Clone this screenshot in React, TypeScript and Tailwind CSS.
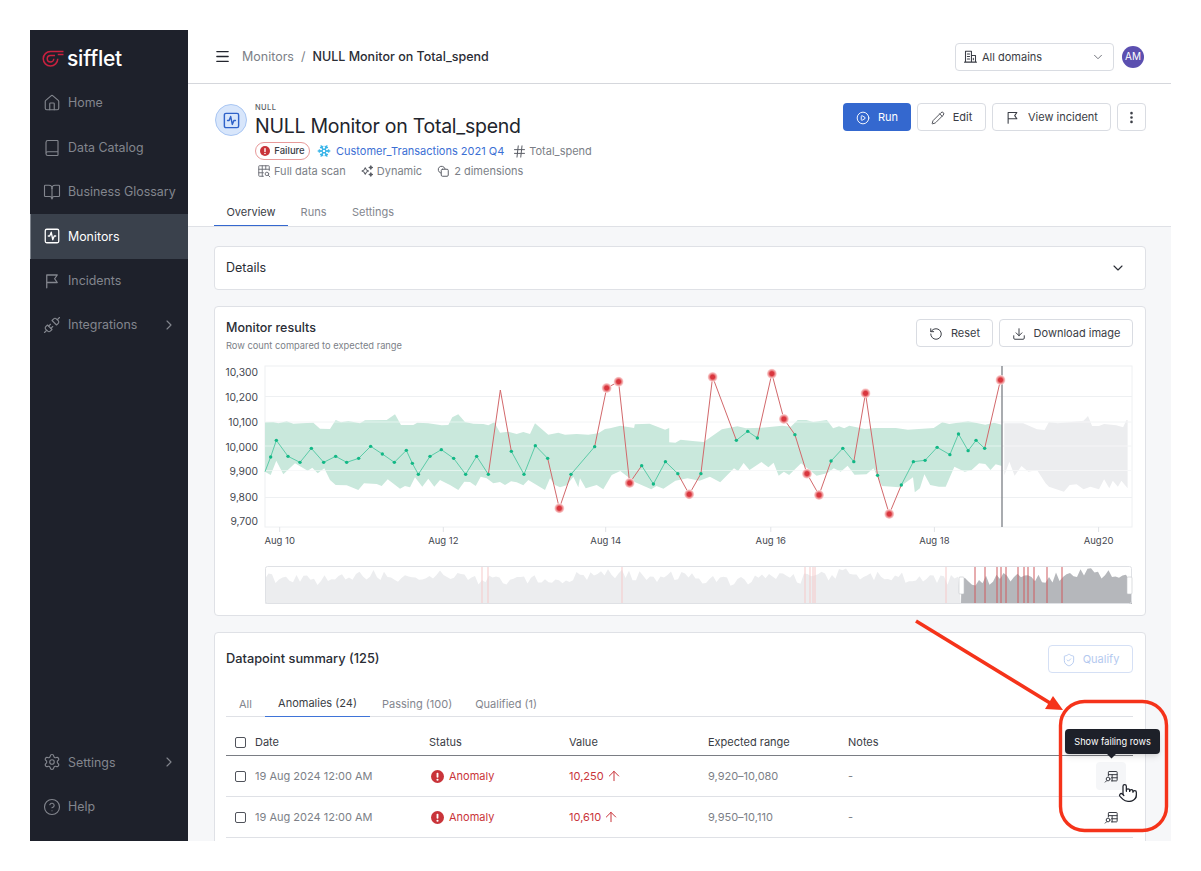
import {
  ArrowUp,
  BookOpen,
  Book,
  ChevronDown,
  ChevronRight,
  CircleHelp,
  CirclePlay,
  Download,
  EllipsisVertical,
  Hash,
  House,
  Menu,
  Pencil,
  Pointer,
  RotateCcw,
  Settings,
  ShieldCheck,
  Snowflake,
  SquareActivity,
  Unplug,
} from "lucide-react";

type Pt = [number, number];

// chart coordinates were read off two crops, so two scales
const a = (x: number, y: number): Pt => [x / 3, y / 3];
const b = (x: number, y: number): Pt => [395 + x / 2.904, y / 3];
const toPts = (list: Pt[]) => list.map((p) => `${p[0].toFixed(1)},${p[1].toFixed(1)}`).join(" ");

const bandTop: Pt[] = [
  a(150, 187), a(175, 186), a(190, 190), a(215, 184), a(235, 191), a(260, 190), a(295, 188), a(315, 206), a(345, 207),
  a(362, 180), a(378, 187), a(400, 183), a(435, 190), a(450, 181), a(515, 180), a(540, 163), a(558, 195), a(595, 195),
  a(607, 188), a(640, 190), a(680, 196), a(700, 195), a(712, 172), a(730, 163), a(750, 186), a(775, 191), a(805, 192),
  a(820, 196), a(838, 187), a(855, 218), a(880, 215), a(905, 222), a(925, 216), a(945, 222), a(960, 190), a(1000, 224),
  a(1030, 218), a(1050, 224), a(1085, 222), a(1120, 224), a(1150, 220), a(1170, 207), a(1185, 205),
  b(30, 197), b(70, 204), b(72, 193), b(115, 191), b(160, 209), b(172, 204), b(172, 247), b(190, 248), b(205, 239),
  b(240, 243), b(272, 246), b(325, 208), b(370, 199), b(395, 205), b(440, 203), b(500, 197), b(525, 200), b(545, 180),
  b(570, 180), b(590, 186), b(630, 180), b(648, 205), b(665, 199), b(680, 205), b(695, 197), b(740, 207), b(770, 204),
  b(830, 204), b(865, 209), b(940, 204), b(965, 187), b(985, 192), b(1040, 184), b(1090, 194), b(1115, 188), b(1138, 194),
];
const bandBottom: Pt[] = [
  a(150, 335), a(167, 345), a(184, 302), a(205, 343), a(240, 310), a(278, 332), a(292, 323), a(308, 340), a(328, 325),
  a(345, 360), a(362, 375), a(395, 376), a(430, 390), a(447, 370), a(485, 372), a(500, 378), a(518, 358), a(555, 386),
  a(570, 378), a(585, 382), a(600, 352), a(622, 380), a(640, 356), a(658, 380), a(675, 360), a(705, 375), a(730, 390),
  a(748, 365), a(765, 366), a(782, 378), a(797, 350), a(815, 355), a(835, 370), a(855, 366), a(870, 375), a(888, 364),
  a(905, 367), a(925, 376), a(940, 360), a(990, 390), a(1005, 355), a(1020, 375), a(1035, 382), a(1055, 376), a(1075, 350),
  a(1090, 382), a(1095, 355), a(1112, 385), a(1145, 375), a(1165, 388), a(1190, 345),
  b(30, 333), b(70, 365), b(120, 388), b(135, 378), b(155, 386), b(190, 362), b(225, 355), b(260, 362), b(290, 350),
  b(320, 367), b(360, 325), b(372, 333), b(388, 309), b(405, 330), b(440, 306), b(460, 322), b(475, 308), b(490, 347),
  b(505, 335), b(520, 345), b(555, 310), b(600, 347), b(630, 340), b(650, 325), b(670, 335), b(690, 317), b(710, 344),
  b(745, 343), b(765, 325), b(790, 378), b(840, 382), b(880, 352), b(885, 397), b(900, 385), b(913, 343), b(930, 375),
  b(955, 380), b(975, 380), b(1000, 320), b(1030, 335), b(1050, 330), b(1072, 310), b(1090, 312), b(1105, 330), b(1120, 313),
  b(1138, 318),
];
const forecastTop: Pt[] = [
  b(1145, 190), b(1200, 190), b(1240, 208), b(1262, 210), b(1275, 186), b(1300, 190), b(1340, 186), b(1375, 182),
  b(1388, 168), b(1400, 198), b(1420, 198), b(1435, 192), b(1470, 196), b(1490, 202), b(1500, 180), b(1503, 180),
];
const forecastBottom: Pt[] = [
  b(1145, 346), b(1160, 305), b(1175, 347), b(1195, 318), b(1215, 335), b(1240, 330), b(1265, 370), b(1275, 380),
  b(1318, 395), b(1335, 375), b(1355, 373), b(1375, 388), b(1395, 380), b(1420, 388), b(1435, 358), b(1450, 385),
  b(1460, 362), b(1475, 380), b(1485, 362), b(1503, 385),
];

type Kind = "g" | "r" | "n" | "l";
const series: [Pt, Kind][] = [
  [a(150, 335), "l"], [a(167, 291), "g"], [a(184, 241), "g"], [a(219, 289), "g"], [a(255, 307), "g"], [a(289, 265), "g"],
  [a(326, 307), "g"], [a(362, 289), "g"], [a(395, 307), "g"], [a(431, 295), "g"], [a(467, 259), "g"], [a(502, 282), "g"],
  [a(538, 307), "g"], [a(574, 271), "g"], [a(592, 310), "g"], [a(610, 343), "g"], [a(645, 289), "g"], [a(679, 269), "g"],
  [a(716, 295), "g"], [a(752, 343), "g"], [a(785, 289), "g"], [a(820, 343), "g"], [a(856, 90), "n"], [a(889, 274), "g"],
  [a(927, 343), "g"], [a(961, 257), "g"], [a(998, 295), "g"], [a(1033, 445), "r"], [a(1068, 343), "g"], [a(1139, 260), "g"],
  [a(1175, 84), "r"], [b(25, 65), "r"], [b(57, 369), "r"], [b(92, 317), "g"], [b(126, 372), "g"], [b(161, 305), "g"],
  [b(197, 341), "g"], [b(230, 403), "r"], [b(264, 341), "g"], [b(298, 51), "r"], [b(367, 241), "g"], [b(400, 214), "g"],
  [b(428, 234), "g"], [b(470, 41), "r"], [b(505, 177), "r"], [b(537, 224), "g"], [b(572, 341), "r"], [b(607, 405), "r"],
  [b(642, 303), "g"], [b(676, 265), "g"], [b(708, 305), "g"], [b(742, 100), "r"], [b(777, 346), "g"], [b(811, 462), "r"],
  [b(846, 375), "g"], [b(881, 305), "g"], [b(915, 301), "g"], [b(950, 262), "g"], [b(987, 284), "g"], [b(1012, 222), "g"],
  [b(1040, 272), "g"], [b(1063, 241), "g"], [b(1088, 265), "g"], [b(1134, 60), "r"],
];

const yLabels: [string, number][] = [
  ["10,300", 12], ["10,200", 37], ["10,100", 62], ["10,000", 87], ["9,900", 111], ["9,800", 137], ["9,700", 161],
];
const gridY = [36.5, 62, 86, 110.5, 137.5];
const xTicks: [string, number][] = [
  ["Aug 10", 64.7], ["Aug 12", 228.3], ["Aug 14", 390.7], ["Aug 16", 555.8], ["Aug 18", 719.4], ["Aug20", 883.6],
];

// jagged outline of the overview strip, seeded so it stays the same on each load
const overview: Pt[] = (() => {
  const out: Pt[] = [];
  let seed = 17;
  for (let x = 50; x <= 917; x += 3.5) {
    seed = (seed * 1103 + 12345) % 2147;
    const noise = (seed / 2147) * 11;
    const wave = Math.sin(x / 37) * 2.5 + Math.sin(x / 13) * 1.5;
    out.push([x, 9 + noise + wave]);
  }
  return out;
})();
const lightMarks = [267, 273, 407, 590, 595, 598, 600, 731];
const darkMarks = [760, 770, 782, 786, 791, 803, 809, 813, 819, 832, 847];

function TableSearchIcon({ className }: { className?: string }) {
  return (
    <svg className={className} viewBox="0 0 24 24" fill="none" stroke="currentColor" strokeWidth={1.6} strokeLinecap="round" strokeLinejoin="round">
      <path d="M7 11V5a1 1 0 0 1 1-1h12a1 1 0 0 1 1 1v13a1 1 0 0 1-1 1h-8" />
      <path d="M7 9h14M12 14h9M13 9v10" />
      <circle cx="6.500" cy="16" r="3" />
      <path d="M4 19l-2 2" />
    </svg>
  );
}

function ScanIcon({ className }: { className?: string }) {
  return (
    <svg className={className} viewBox="0 0 24 24" fill="none" stroke="currentColor" strokeWidth={1.6} strokeLinecap="round" strokeLinejoin="round">
      <path d="M11 21H4a1 1 0 0 1-1-1V4a1 1 0 0 1 1-1h16a1 1 0 0 1 1 1v7" />
      <path d="M3 9h18M3 15h8M9 3v18M15 3v6" />
      <circle cx="17" cy="17" r="3" />
      <path d="M19.500 19.500L22 22" />
    </svg>
  );
}

function ShapesIcon({ className }: { className?: string }) {
  return (
    <svg className={className} viewBox="0 0 24 24" fill="none" stroke="currentColor" strokeWidth={1.7} strokeLinecap="round" strokeLinejoin="round">
      <path d="M8 15.500a6 6 0 1 1 7.500-7.500" />
      <rect x="9" y="9" width="12" height="12" rx="2" />
    </svg>
  );
}

function SparkIcon({ className }: { className?: string }) {
  return (
    <svg className={className} viewBox="0 0 24 24" fill="none" stroke="currentColor" strokeWidth={1.8} strokeLinejoin="round">
      <path d="M9 6.500l2 3.500 3.500 2-3.500 2-2 3.500-2-3.500-3.500-2 3.500-2z" />
      <path d="M18.500 3l1 2 2 1-2 1-1 2-1-2-2-1 2-1z" fill="currentColor" />
      <path d="M18.500 15l1 2 2 1-2 1-1 2-1-2-2-1 2-1z" fill="currentColor" />
    </svg>
  );
}

function BuildingIcon({ className }: { className?: string }) {
  return (
    <svg className={className} viewBox="0 0 24 24" fill="none" stroke="currentColor" strokeWidth={1.7} strokeLinecap="round" strokeLinejoin="round">
      <path d="M2.500 21h19M4 21V3.500h9.500V21M13.500 10.500H20V21" />
      <path d="M7 8h3.500M7 12h3.500M7 16h3.500M16.500 15v2" />
    </svg>
  );
}

function FlagIcon({ className }: { className?: string }) {
  return (
    <svg className={className} viewBox="0 0 24 24" fill="none" stroke="currentColor" strokeWidth={1.7} strokeLinecap="round" strokeLinejoin="round">
      <path d="M5 21V4h14l-3.500 5 3.500 5H5" />
    </svg>
  );
}

function AlertDot({ className }: { className?: string }) {
  return (
    <svg className={className} viewBox="0 0 24 24">
      <circle cx="12" cy="12" r="12" fill="#c9343a" />
      <rect x="10.300" y="5" width="3.400" height="9.500" rx="1.500" fill="#fff" />
      <circle cx="12" cy="18" r="2" fill="#fff" />
    </svg>
  );
}

function Logo() {
  return (
    <div className="flex h-[51px] items-center pl-3 pt-[6px]">
      <svg className="h-[17px] w-[22px]" viewBox="0 0 22 17" fill="none" stroke="#c9213f" strokeWidth={1.5}>
        <path d="M21.500 1.500H8.500a7.250 7.250 0 1 0 7.250 7.250" />
        <path d="M13 5.500H8.500a3.250 3.250 0 1 0 3.250 3.250" />
        <path d="M15.750 4.500h5.750" />
      </svg>
      <span className="ml-[3px] text-[21px] leading-none font-medium tracking-[-0.2px] text-white">sifflet</span>
    </div>
  );
}

function NavItem({ icon, label, active, arrow }: { icon: React.ReactNode; label: string; active?: boolean; arrow?: boolean }) {
  return (
    <div
      className={`flex h-[44.400px] items-center gap-[7px] whitespace-nowrap pr-[11px] text-[12.400px] ${
        active ? "border-l border-[#7d838c] bg-[#3a414c] pl-[12px] text-white" : "pl-[13px] text-[#83868e]"
      }`}
    >
      {icon}
      <span className="flex-1 pt-[1px]">{label}</span>
      {arrow && <ChevronRight className="h-4 w-4" strokeWidth={1.7} />}
    </div>
  );
}

function OutlineButton({ children, className }: { children: React.ReactNode; className?: string }) {
  return (
    <button className={`flex h-7 items-center justify-center gap-[8px] rounded border border-[#d9dce2] bg-white pt-[1px] text-[11px] text-[#3a3d45] ${className ?? ""}`}>
      {children}
    </button>
  );
}

function Chart() {
  const segments = series.slice(1).map((item, i) => {
    const prev = series[i];
    const red = item[1] === "r" || item[1] === "n" || prev[1] === "r" || prev[1] === "n";
    return { from: prev[0], to: item[0], red };
  });
  return (
    <svg className="block h-[190px] w-[930px]" viewBox="0 0 930 190">
      <defs>
        <radialGradient id="glow">
          <stop offset="40%" stopColor="#d9363e" />
          <stop offset="65%" stopColor="#ec8a8c" />
          <stop offset="100%" stopColor="#fde3e3" />
        </radialGradient>
      </defs>
      <rect x="50" y="6" width="867" height="161" fill="#fff" stroke="#eef0f2" />
      {gridY.map((y) => (
        <line key={y} x1="50" x2="917" y1={y} y2={y} stroke="#eef0f2" />
      ))}
      <polygon points={toPts([...bandTop, ...[...bandBottom].reverse()])} fill="#c9e8dc" />
      <polygon points={toPts([...forecastTop, ...[...forecastBottom].reverse()])} fill="#ecedef" />
      {gridY.slice(1, 4).map((y) => (
        <line key={y} x1="50" x2="917" y1={y} y2={y} stroke="#fff" strokeOpacity={0.5} />
      ))}
      <line x1="787" x2="787" y1="6" y2="167" stroke="#85888e" strokeWidth={1.4} />
      {segments.map((s, i) => (
        <line key={i} x1={s.from[0]} y1={s.from[1]} x2={s.to[0]} y2={s.to[1]} stroke={s.red ? "#d2686b" : "#5ccba8"} strokeWidth={1} />
      ))}
      {series.map(([p, kind], i) =>
        kind === "g" ? (
          <circle key={i} cx={p[0]} cy={p[1]} r={1.7} fill="#12b886" />
        ) : kind === "r" ? (
          <circle key={i} cx={p[0]} cy={p[1]} r={5} fill="url(#glow)" />
        ) : null,
      )}
      {yLabels.map(([label, y]) => (
        <text key={label} x="43" y={y + 4} textAnchor="end" fontSize="10.3" fill="#44474f">
          {label}
        </text>
      ))}
      {xTicks.map(([label, x]) => (
        <g key={label}>
          <line x1={x} x2={x} y1="167" y2="172" stroke="#e1e3e7" />
          <text x={x} y="184" textAnchor="middle" fontSize="9.5" fill="#44474f">
            {label}
          </text>
        </g>
      ))}
    </svg>
  );
}

function Overview() {
  const leftPart = overview.filter((p) => p[0] <= 746);
  const rightPart = overview.filter((p) => p[0] >= 746);
  return (
    <svg className="mt-[13px] block h-[45px] w-[930px]" viewBox="0 0 930 45">
      <polygon points={toPts([[50, 41], ...leftPart, [746, 41]])} fill="#ecedef" />
      <polygon points={toPts([[746, 41], ...rightPart, [917, 41]])} fill="#b5b7bb" />
      {lightMarks.map((x) => (
        <line key={x} x1={x} x2={x} y1="3" y2="41" stroke="#f6c9c9" />
      ))}
      {darkMarks.map((x) => (
        <line key={x} x1={x} x2={x} y1="3" y2="41" stroke="#cf5b5f" />
      ))}
      <rect x="50.500" y="3.500" width="866" height="37" rx="2" fill="none" stroke="#dfe1e5" />
      <rect x="744" y="14" width="5" height="17" rx="1" fill="#fff" stroke="#c5c7cb" strokeWidth={0.6} />
      <rect x="912" y="14" width="5" height="17" rx="1" fill="#fff" stroke="#c5c7cb" strokeWidth={0.6} />
    </svg>
  );
}

const rowGrid = "grid grid-cols-[29px_174px_140px_139px_140px_1fr_44px] items-center";

function Row({ value, hovered }: { value: string; hovered?: boolean }) {
  return (
    <div className={`${rowGrid} h-[41px] border-b border-[#dfe1e6] text-[11px]`}>
      <span className="ml-[9px] h-[11px] w-[11px] rounded-[2px] border border-[#50535b]" />
      <span className="text-[#7c7f87]">19 Aug 2024 12:00 AM</span>
      <span className="ml-[2px] flex items-center gap-[5px] text-[#c9343a]">
        <AlertDot className="h-[13px] w-[13px]" />
        Anomaly
      </span>
      <span className="flex items-center gap-[2px] text-[#c9343a]">
        {value}
        <ArrowUp className="h-[16px] w-[16px]" strokeWidth={1.5} />
      </span>
      <span className="text-[#7c7f87]">{value === "10,250" ? "9,920–10,080" : "9,950–10,110"}</span>
      <span className="text-[#7c7f87]">-</span>
      <span className={`ml-[7px] flex h-[28px] w-[30px] items-center justify-center rounded ${hovered ? "bg-[#f5f6f8]" : ""}`}>
        <TableSearchIcon className="h-[15px] w-[15px] text-[#3a3d45]" />
      </span>
    </div>
  );
}

export default function App() {
  return (
    <div className="relative h-[871px] w-[1201px] overflow-hidden bg-white p-[30px] font-['Inter',sans-serif]">
      <div className="flex h-[811px] w-[1141px] overflow-hidden">
        {/* Sidebar */}
        <aside className="flex w-[158px] shrink-0 flex-col bg-[#1e212b] pb-[12px]">
          <Logo />
          <NavItem icon={<House className="h-[18px] w-[18px]" strokeWidth={1.5} />} label="Home" />
          <NavItem icon={<Book className="h-[18px] w-[18px]" strokeWidth={1.5} />} label="Data Catalog" />
          <NavItem icon={<BookOpen className="h-[18px] w-[18px]" strokeWidth={1.5} />} label="Business Glossary" />
          <NavItem icon={<SquareActivity className="h-[18px] w-[18px]" strokeWidth={1.7} />} label="Monitors" active />
          <NavItem icon={<FlagIcon className="h-[18px] w-[18px]" />} label="Incidents" />
          <NavItem icon={<Unplug className="h-[18px] w-[18px]" strokeWidth={1.5} />} label="Integrations" arrow />
          <div className="mt-auto">
            <NavItem icon={<Settings className="h-[18px] w-[18px]" strokeWidth={1.5} />} label="Settings" arrow />
            <NavItem icon={<CircleHelp className="h-[18px] w-[18px]" strokeWidth={1.5} />} label="Help" />
          </div>
        </aside>

        <main className="flex min-w-0 flex-1 flex-col">
          {/* Top bar */}
          <header className="flex h-[54px] shrink-0 items-center border-b border-[#d5d7dc] pl-[26px] pr-[27px]">
            <Menu className="h-[17px] w-[17px] text-[#22252d]" strokeWidth={1.8} />
            <div className="ml-[11px] flex items-center gap-[7px] pt-[1px] text-[12.500px]">
              <span className="text-[#7c7f87]">Monitors</span>
              <span className="text-[#7c7f87]">/</span>
              <span className="font-[450] text-[#2a2d35]">NULL Monitor on Total_spend</span>
            </div>
            <div className="ml-auto flex h-7 w-[159px] items-center rounded border border-[#d9dce2] pl-[7px] pr-[8px] text-[11px] text-[#3a3d45]">
              <BuildingIcon className="h-[15px] w-[15px]" />
              <span className="ml-[4px] flex-1 pt-[1px]">All domains</span>
              <ChevronDown className="h-[14px] w-[14px] text-[#6a6d75]" strokeWidth={1.6} />
            </div>
            <div className="ml-[8px] flex h-[22px] w-[22px] items-center justify-center rounded-full bg-[#5b4fb0] text-[10px] text-white">AM</div>
          </header>

          {/* Monitor head */}
          <section className="shrink-0 border-b border-[#dfe1e6] pl-[26px] pr-[25px]">
            <div className="flex h-[114px] pt-[19px]">
              <div className="ml-[1px] mt-[1px] flex h-[32px] w-[32px] items-center justify-center rounded-full border border-[#a9c6f3] bg-[#d8e6fb]">
                <SquareActivity className="h-[19px] w-[19px] text-[#2f62c9]" strokeWidth={1.8} />
              </div>
              <div className="ml-[8px] flex-1">
                <div className="text-[7.500px] leading-[9px] font-medium tracking-[0.4px] text-[#5a5d65]">NULL</div>
                <div className="mt-[1px] text-[19.500px] leading-[26px] font-normal tracking-[-0.25px] text-[#22252d]">NULL Monitor on Total_spend</div>
                <div className="mt-[3px] flex h-[18px] items-center text-[11px]">
                  <span className="flex h-[18px] w-[55px] items-center justify-center gap-[4px] rounded-full border border-[#e89a9a] text-[9.500px] font-medium text-[#3a3d45]">
                    <AlertDot className="h-[10px] w-[10px]" />
                    Failure
                  </span>
                  <Snowflake className="ml-[7px] h-[14px] w-[14px] text-[#39b4e8]" strokeWidth={2.2} />
                  <span className="ml-[5px] text-[#3b6fd4]">Customer_Transactions 2021 Q4</span>
                  <Hash className="ml-[8px] h-[15px] w-[15px] text-[#5a5d65]" strokeWidth={1.6} />
                  <span className="ml-[2px] text-[#7c7f87]">Total_spend</span>
                </div>
                <div className="mt-[2px] flex h-[18px] items-center text-[11px] text-[#7c7f87]">
                  <ScanIcon className="ml-[2px] h-[14px] w-[14px] text-[#6a6d75]" />
                  <span className="ml-[3px]">Full data scan</span>
                  <SparkIcon className="ml-[14px] h-[14px] w-[14px] text-[#5a5d65]" />
                  <span className="ml-[3px]">Dynamic</span>
                  <ShapesIcon className="ml-[14px] h-[14px] w-[14px] text-[#5a5d65]" />
                  <span className="ml-[4px]">2 dimensions</span>
                </div>
              </div>
              <div className="flex gap-[6px]">
                <button className="flex h-7 w-[68px] items-center justify-center gap-[8px] rounded bg-[#3468cf] pt-[1px] text-[11px] text-white">
                  <CirclePlay className="h-[14px] w-[14px]" strokeWidth={1.6} />
                  Run
                </button>
                <OutlineButton className="w-[69px]">
                  <Pencil className="h-[14px] w-[14px]" strokeWidth={1.5} />
                  Edit
                </OutlineButton>
                <OutlineButton className="w-[119px]">
                  <FlagIcon className="h-[15px] w-[15px]" />
                  View incident
                </OutlineButton>
                <OutlineButton className="w-[29px]">
                  <EllipsisVertical className="h-[15px] w-[15px]" strokeWidth={2.2} />
                </OutlineButton>
              </div>
            </div>
            <div className="flex h-[28px] text-[11px] text-[#83868e]">
              <div className="flex h-[28px] w-[74px] items-center justify-center border-b-[1.5px] border-[#3468cf] pt-[1px] text-[#3a3d45]">Overview</div>
              <div className="flex w-[51px] items-center justify-center pt-[1px]">Runs</div>
              <div className="flex w-[68px] items-center justify-center pt-[1px]">Settings</div>
            </div>
          </section>

          {/* Content */}
          <div className="min-h-0 flex-1 overflow-hidden bg-[#f6f7f9] pl-[26px] pr-[25px] pt-[19px]">
            <div className="flex h-[44px] items-center justify-between rounded border border-[#dfe1e6] bg-white pl-[11px] pr-[19px] text-[12.500px] text-[#2a2d35]">
              Details
              <ChevronDown className="h-[16px] w-[16px]" strokeWidth={1.7} />
            </div>

            <div className="mt-[16px] h-[310px] rounded border border-[#dfe1e6] bg-white">
              <div className="flex h-[53px] justify-between pl-[11px] pr-[12px] pt-[12px]">
                <div>
                  <div className="text-[12.500px] leading-[17px] font-[450] text-[#2a2d35]">Monitor results</div>
                  <div className="mt-[4px] text-[9.300px] leading-[12px] text-[#7c7f87]">Row count compared to expected range</div>
                </div>
                <div className="flex gap-[6px]">
                  <OutlineButton className="w-[77px]">
                    <RotateCcw className="h-[14px] w-[14px]" strokeWidth={1.7} />
                    Reset
                  </OutlineButton>
                  <OutlineButton className="w-[134px]">
                    <Download className="h-[14px] w-[14px]" strokeWidth={1.7} />
                    Download image
                  </OutlineButton>
                </div>
              </div>
              <Chart />
              <Overview />
            </div>

            <div className="mt-[16px] rounded border border-[#dfe1e6] bg-white pb-[30px] pl-[11px] pr-[12px]">
              <div className="flex h-[53px] items-start justify-between pt-[12px]">
                <span className="mt-[4px] text-[12.800px] font-[450] text-[#2a2d35]">Datapoint summary (125)</span>
                <button className="flex h-7 w-[85px] items-center justify-center gap-[7px] rounded border border-[#d5e0f5] pt-[1px] text-[11px] text-[#b4c9ef]">
                  <ShieldCheck className="h-[14px] w-[14px]" strokeWidth={1.6} />
                  Qualify
                </button>
              </div>
              <div className="flex h-[31px] items-center border-b border-[#dfe1e6] pt-[6px] text-[11px] text-[#83868e]">
                <span className="flex h-[25px] w-[39px] items-center justify-center">All</span>
                <span className="flex h-[25px] w-[105px] items-center justify-center border-b-[1.5px] border-[#3f74d8] text-[#3a3d45]">Anomalies (24)</span>
                <span className="ml-[12px]">Passing (100)</span>
                <span className="ml-[23px]">Qualified (1)</span>
              </div>
              <div className={`${rowGrid} h-[39px] border-b border-[#7a7d84] pt-[12px] text-[11px] text-[#3a3d45]`}>
                <span className="ml-[9px] h-[11px] w-[11px] rounded-[2px] border border-[#50535b]" />
                <span>Date</span>
                <span>Status</span>
                <span>Value</span>
                <span>Expected range</span>
                <span>Notes</span>
                <span />
              </div>
              <Row value="10,250" hovered />
              <Row value="10,610" />
            </div>
          </div>
        </main>
      </div>

      {/* Tooltip over the first row action */}
      <div className="absolute left-[1065px] top-[729px] flex h-[25px] w-[95px] items-center justify-center rounded bg-[#1d2029] text-[9.200px] text-white shadow-md">
        Show failing rows
        <span className="absolute -bottom-[3px] left-[43px] h-[7px] w-[7px] rotate-45 bg-[#1d2029]" />
      </div>

      {/* Hand cursor */}
      <Pointer className="absolute left-[1118px] top-[783px] h-[20px] w-[20px] fill-white text-[#1d2029]" strokeWidth={1.5} />

      {/* Red annotation drawn on top of the screenshot */}
      <svg className="pointer-events-none absolute left-0 top-0 h-[871px] w-[1201px]" viewBox="0 0 1201 871" fill="none">
        <line x1="916" y1="621" x2="1050" y2="703" stroke="#f5331a" strokeWidth={3.6} />
        <polygon points="1063,710 1045,709 1053,696" fill="#f5331a" />
        <rect x="1060.500" y="701.500" width="106" height="129" rx="24" stroke="#f5331a" strokeWidth={3.4} />
      </svg>
    </div>
  );
}
